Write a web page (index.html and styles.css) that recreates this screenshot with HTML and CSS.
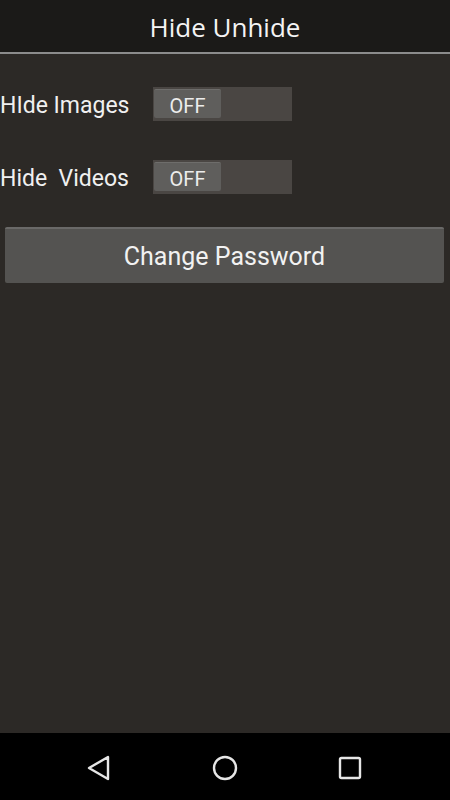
FILE: index.html
```html
<!DOCTYPE html>
<html>
<head>
<meta charset="utf-8">
<link rel="stylesheet" href="styles.css">
</head>
<body>
<div class="screen">
  <header class="bar"><h1 class="title">Hide Unhide</h1></header>
  <main class="content">
    <div class="row row-first">
      <span class="label">HIde Images</span>
      <div class="toggle"><div class="thumb">OFF</div></div>
    </div>
    <div class="row row-second">
      <span class="label">Hide&nbsp; Videos</span>
      <div class="toggle"><div class="thumb">OFF</div></div>
    </div>
    <div class="btn">Change Password</div>
  </main>
  <nav class="nav">
    <svg class="nav-icon" width="28" height="28" viewBox="0 0 28 28"><path d="M22 3 L22 25 L3 14 Z" fill="none" stroke="#e6e6e6" stroke-width="2.4" stroke-linejoin="round"/></svg>
    <svg class="nav-icon" width="28" height="28" viewBox="0 0 28 28"><circle cx="14" cy="14" r="11" fill="none" stroke="#e6e6e6" stroke-width="2.4"/></svg>
    <svg class="nav-icon" width="28" height="28" viewBox="0 0 28 28"><rect x="4" y="4" width="20" height="20" rx="1.5" fill="none" stroke="#e6e6e6" stroke-width="2.4"/></svg>
  </nav>
</div>
</body>
</html>
```
FILE: styles.css
```css
* { box-sizing: border-box; }
html, body { margin: 0; padding: 0; }
body {
  width: 450px;
  height: 800px;
  background: #2c2926;
  font-family: "Roboto", "Noto Sans", sans-serif;
  color: #f2f2f2;
}
.screen {
  display: flex;
  flex-direction: column;
  height: 800px;
}
.bar {
  height: 54px;
  background: #1b1a18;
  border-bottom: 2px solid #8c8c8c;
  display: flex;
  align-items: center;
  justify-content: center;
}
.title {
  margin: 0;
  font-family: "Open Sans", "Noto Sans", sans-serif;
  font-weight: 400;
  font-size: 26px;
  color: #f4f4f4;
  position: relative;
  top: 1px;
}
.content {
  flex: 1;
  display: flex;
  flex-direction: column;
}
.row {
  display: flex;
  align-items: center;
  height: 34px;
}
.row-first { margin-top: 33px; }
.row-second { margin-top: 39px; }
.label {
  width: 153px;
  font-size: 23px;
  color: #f0f0f0;
  position: relative;
  top: 1px;
}
.toggle {
  width: 139px;
  height: 34px;
  background: #4a4643;
  padding: 2px 0 0 1px;
}
.thumb {
  width: 67px;
  height: 29px;
  background: #5f5e5c;
  border-top: 1px solid #6e6d6b;
  border-radius: 2px;
  display: flex;
  align-items: center;
  justify-content: center;
  padding-top: 3px;
  font-size: 20px;
  color: #ececec;
}
.btn {
  margin: 33px 6px 0 5px;
  height: 56px;
  background: #545351;
  border-top: 2px solid #6a6968;
  border-radius: 2px;
  display: flex;
  align-items: center;
  justify-content: center;
  font-size: 25px;
  color: #f2f2f2;
}
.nav {
  height: 67px;
  background: #000;
  display: flex;
  align-items: center;
  justify-content: center;
  gap: 97px;
  padding-top: 2px;
}
.nav-icon { display: block; }
```
